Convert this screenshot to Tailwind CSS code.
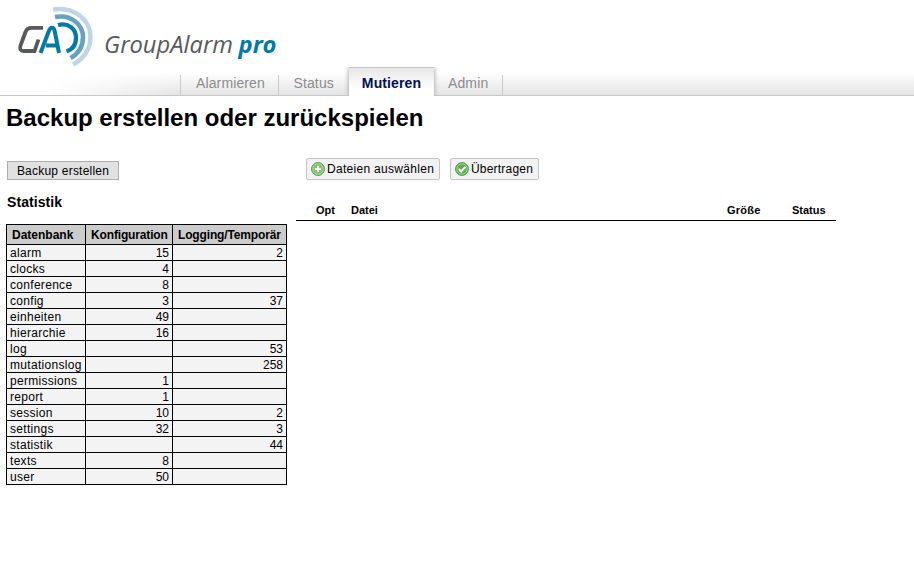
<!DOCTYPE html>
<html lang="de">
<head>
<meta charset="utf-8">
<title>GroupAlarm pro</title>
<script src="https://cdn.jsdelivr.net/npm/@tailwindcss/browser@4"></script>
</head>
<body class="bg-white text-black font-['Liberation_Sans',Arial,sans-serif] text-[12px] w-[914px] h-[573px] overflow-hidden">
<header class="relative h-24 border-b border-[#c8c8c8]">
  <svg class="block w-[290px] h-[67px]" viewBox="0 0 290 67" fill="none">
    <path d="M53 9.500C74 6 90.500 20 90.500 37C90.500 49 83.500 59 73 64.500" stroke="#bfd4e5" stroke-width="4.500"/>
    <path d="M55 17C71 14 83 24.500 83 37C83 47 78 54 70.500 58" stroke="#65a0c5" stroke-width="4.500"/>
    <path d="M58 25C68.500 22.500 76 29 76 37.500C76 44.500 72.500 49.500 66.500 51.200" stroke="#007aa8" stroke-width="4.200"/>
    <path d="M43 27.800H31.500Q27 27.800 25.500 32L20.500 45.500Q19 51 23.500 51H34.500L38.500 39.500" stroke="#58595b" stroke-width="3.800"/>
    <path d="M40.500 53L48.500 32Q50 27.800 52 27.800T54.800 31.500L59 53M46 45.500H57" stroke="#007aa8" stroke-width="4"/>
    <text x="104" y="53" font-family="Open Sans, sans-serif" font-size="24" font-style="italic" fill="#58595b" textLength="129" lengthAdjust="spacingAndGlyphs">GroupAlarm</text>
    <text x="238.500" y="53" font-family="Open Sans, sans-serif" font-size="23" font-weight="700" font-style="italic" fill="#007aa8" textLength="38" lengthAdjust="spacingAndGlyphs">pro</text>
  </svg>
  <nav class="flex h-7 items-end text-[14px] text-[#8c8c8c] bg-linear-to-b from-white from-20% to-[#e4e4e4]">
    <div class="w-[180px] h-full bg-linear-to-r from-white from-25% to-transparent"></div>
    <a class="w-[98px] h-5 border-l border-[#c9c9c9] pl-[15px] leading-[16px]"><span class="tracking-[0.120px]">Alarmieren</span></a>
    <a class="w-[71px] h-5 border-l border-[#c9c9c9] pl-[14.500px] leading-[16px]"><span class="tracking-[0.120px]">Status</span></a>
    <a class="relative z-10 -mb-px w-[85px] h-[29px] text-center font-bold text-[#001054] leading-[30px] bg-linear-to-b from-[#e7e7e7] to-white to-75% border-t border-[#c4c4c4] shadow-[0_0_5px_#999] [clip-path:inset(0_-6px_0_-6px)]"><span class="tracking-[0.120px]">Mutieren</span></a>
    <a class="w-[69px] h-5 border-r border-[#c9c9c9] pl-[14px] leading-[16px]"><span class="tracking-[0.120px]">Admin</span></a>
  </nav>
</header>
<main class="pl-1.5">
  <h1 class="h-[62px] pt-[8px] text-[24px] leading-[28px] font-bold"><span>Backup erstellen oder zurückspielen</span></h1>
  <div class="flex">
    <section class="w-[290px] pt-[3px]">
      <button class="ml-px block w-[112px] h-[19px] border border-[#adadad] bg-[#e1e1e1] leading-[18px] whitespace-nowrap tracking-[0.220px]">Backup erstellen</button>
      <h2 class="mt-[13px] h-[31px] pl-px text-[14px] leading-[18px] font-bold tracking-[0.080px]">Statistik</h2>
      <table class="w-[281px] table-fixed border-separate border-spacing-0 border-l border-t border-black">
        <colgroup><col class="w-[79px]"><col class="w-[87px]"><col class="w-[114px]"></colgroup>
        <thead><tr class="h-5 bg-[#cccccc] leading-[17px] text-left whitespace-nowrap">
          <th class="p-0 pt-[2px] pl-[5px] border-r border-b border-black">Datenbank</th>
          <th class="p-0 pt-[2px] pl-[5px] border-r border-b border-black tracking-[-0.150px]">Konfiguration</th>
          <th class="p-0 pt-[2px] pl-[5px] border-r border-b border-black tracking-[-0.150px]">Logging/Temporär</th>
        </tr></thead>
        <tbody id="stats"></tbody>
      </table>
    </section>
    <section class="w-[540px]">
      <div class="flex gap-[10px] pl-[10px] whitespace-nowrap">
        <button class="flex w-[134px] h-[22px] items-center gap-[2px] rounded-[2px] border border-[#c5c5c5] bg-[#f2f2f2] pl-1">
          <svg class="w-[14px] h-[14px] shrink-0" viewBox="0 0 14 14"><circle cx="7" cy="7" r="6.400" fill="#83c46f" stroke="#4c9a48"/><circle cx="7" cy="7" r="5.200" fill="none" stroke="#b5dda9" stroke-width=".8"/><path d="M7 4v6M4 7h6" stroke="#fff" stroke-width="2"/></svg>
          <span class="tracking-[0.300px]">Dateien auswählen</span>
        </button>
        <button class="flex w-[89px] h-[22px] items-center gap-[2px] rounded-[2px] border border-[#c5c5c5] bg-[#f2f2f2] pl-1">
          <svg class="w-[14px] h-[14px] shrink-0" viewBox="0 0 14 14"><circle cx="7" cy="7" r="6.400" fill="#58b04b" stroke="#4c9a48"/><circle cx="7" cy="7" r="5.200" fill="none" stroke="#b5dda9" stroke-width=".8"/><path d="M3.800 7l2.400 2.500 4.200-4.700" fill="none" stroke="#fff" stroke-width="2"/></svg>
          <span class="tracking-[0.200px]">Übertragen</span>
        </button>
      </div>
      <div class="mt-[21px] flex h-5 border-b border-black pl-5 text-[11px] leading-[18px] font-bold">
        <span class="w-[35px]">Opt</span><span class="w-[376px]">Datei</span><span class="w-[65px] tracking-[0.250px]">Größe</span><span>Status</span>
      </div>
    </section>
  </div>
</main>
<script>
const data = [['alarm',15,2],['clocks',4,''],['conference',8,''],['config',3,37],['einheiten',49,''],['hierarchie',16,''],['log','',53],['mutationslog','',258],['permissions',1,''],['report',1,''],['session',10,2],['settings',32,3],['statistik','',44],['texts',8,''],['user',50,'']];
document.getElementById('stats').innerHTML = data.map(([n, k, l]) => `<tr class="h-4 bg-[#f3f3f3] leading-[13px]"><td class="p-0 pt-[2px] pl-[3px] border-r border-b border-black whitespace-nowrap tracking-[0.300px]">${n}</td><td class="p-0 pt-[2px] pr-[3px] border-r border-b border-black text-right">${k}</td><td class="p-0 pt-[2px] pr-[3px] border-r border-b border-black text-right">${l}</td></tr>`).join('');
</script>
</body>
</html>
